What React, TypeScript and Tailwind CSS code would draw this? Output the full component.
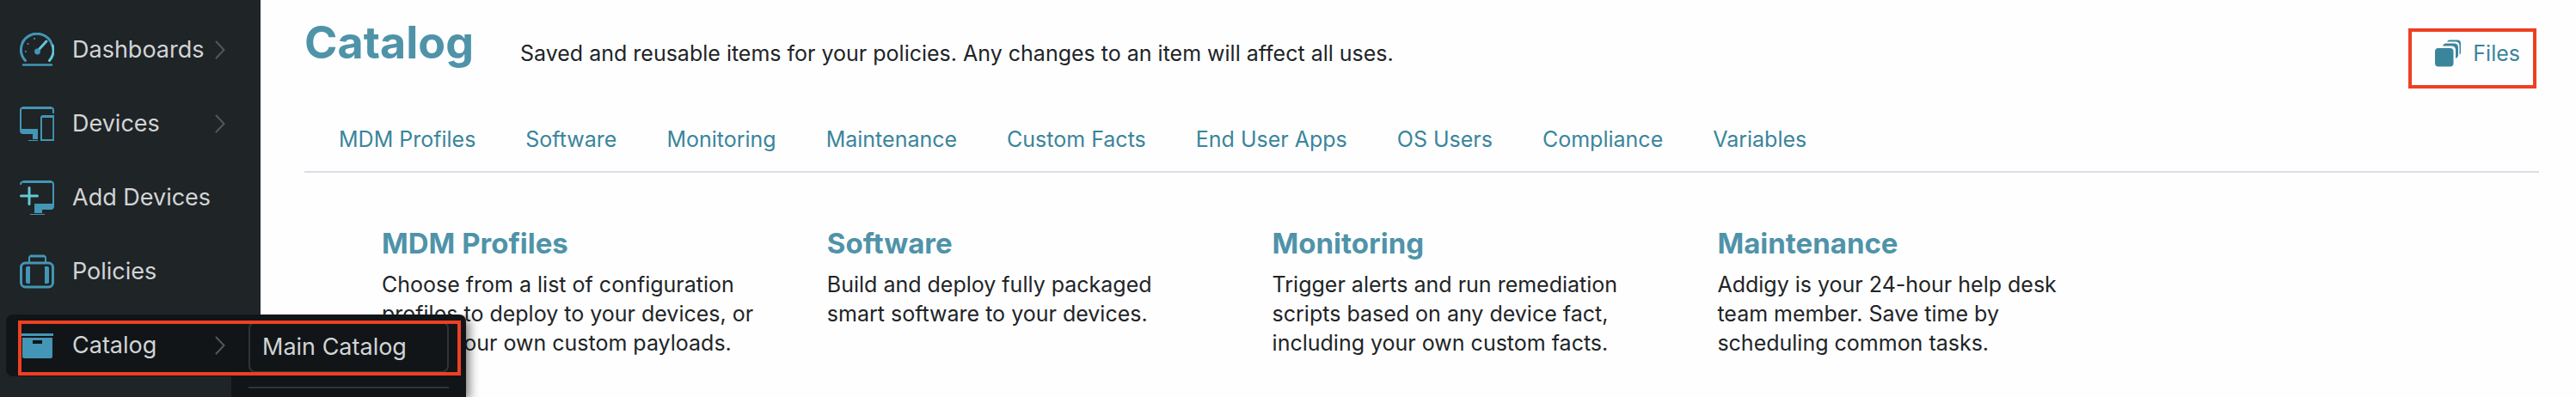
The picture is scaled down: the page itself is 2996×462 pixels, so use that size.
import { useState } from 'react';

const ICON = '#4396b5';
const ACCENT = '#63c7d8';

function DashboardIcon() {
  return (
    <svg viewBox="0 0 40 40" className="size-10 shrink-0" fill="none" strokeLinecap="round">
      <path d="M6.500 32.500A18.500 18.500 0 1 1 37.500 14" stroke={ICON} strokeWidth="3" />
      <path d="M38.200 15A18.500 18.500 0 0 1 34.500 32.500" stroke={ACCENT} strokeWidth="3" />
      <path d="M21 21L31 10" stroke={ACCENT} strokeWidth="3" />
      <circle cx="20.500" cy="22" r="3.400" fill={ICON} />
      <path d="M17 7h.1M9.500 13h.1M6.800 22h.1" stroke={ICON} strokeWidth="2" />
      <path d="M4 37.500h33" stroke={ICON} strokeWidth="2.500" />
    </svg>
  );
}

function DevicesIcon() {
  return (
    <svg viewBox="0 0 40 40" className="size-10 shrink-0" fill="none">
      <path d="M39 8V4q0-2.500-2.500-2.500h-33Q1 1.500 1 4v24" stroke={ICON} strokeWidth="2" />
      <path d="M3 1.500h34" stroke={ICON} strokeWidth="3" />
      <path d="M0 26h21v12h-6v-6H4q-4 0-4-4z" fill={ICON} />
      <path d="M10 39.500h11" stroke={ICON} strokeWidth="1" />
      <path d="M25 40V13q0-2 2-2h12.200v28H24" stroke={ICON} strokeWidth="2" />
      <path d="M26 11.500h14" stroke={ICON} strokeWidth="3" />
    </svg>
  );
}

function AddDevicesIcon() {
  return (
    <svg viewBox="0 0 40 40" className="size-10 shrink-0" fill="none">
      <path d="M1 5q0-3.500 3-3.500h32q3 0 3 3V30" stroke={ICON} strokeWidth="2" />
      <path d="M4 1.500h33" stroke={ICON} strokeWidth="3" />
      <path d="M17 27h23v3q0 4-4 4H26v4h-9z" fill={ICON} />
      <path d="M12 39.500h17" stroke={ICON} strokeWidth="1" />
      <path d="M1.500 18h19M11 8.500v19" stroke={ACCENT} strokeWidth="3" strokeLinecap="round" />
    </svg>
  );
}

function PoliciesIcon() {
  return (
    <svg viewBox="0 0 40 40" className="size-10 shrink-0" fill="none">
      <rect x="1.500" y="10" width="37" height="28" rx="5" stroke={ICON} strokeWidth="3" />
      <path d="M11 10V4q0-2 2-2h15q2 0 2 2v6" stroke={ICON} strokeWidth="2" />
      <path d="M12 2h17" stroke={ICON} strokeWidth="3" />
      <path d="M12 14v20H9q-2 0-2-2V16q0-2 2-2zM29 14v20h3q2 0 2-2V16q0-2-2-2z" fill={ICON} />
    </svg>
  );
}

function CatalogIcon() {
  return (
    <svg viewBox="0 0 40 40" className="size-10 shrink-0">
      <path d="M2 6h37v3H2z" fill={ICON} />
      <path d="M3 11h35v22q0 2-2 2H5q-2 0-2-2z" fill={ICON} />
      <rect x="15" y="14" width="11" height="4" fill="#111518" />
    </svg>
  );
}

function FilesIcon() {
  return (
    <svg viewBox="0 0 30 31" className="h-8 w-[30px] shrink-0" fill="#3a859c">
      <rect x="0" y="9.500" width="21.500" height="21.500" rx="4" />
      <path d="M9 7Q10 4 13 4h9q5 0 5 5v9q0 2-3 3.500V12q0-5-5-5z" />
      <path d="M14 2q1-2 3-2h9q4 0 4 4v11q0 1.500-1.500 2V7q0-5-5-5z" />
    </svg>
  );
}

function Chevron() {
  return (
    <svg viewBox="0 0 12 22" className="h-[22px] w-3 shrink-0" fill="none" stroke="#55585a" strokeWidth="2" strokeLinecap="round">
      <path d="M1.500 1.500l9 9.500-9 9.500" />
    </svg>
  );
}

const navItems = [
  { label: 'Dashboards', icon: DashboardIcon, hasMenu: true },
  { label: 'Devices', icon: DevicesIcon, hasMenu: true },
  { label: 'Add Devices', icon: AddDevicesIcon, hasMenu: false },
  { label: 'Policies', icon: PoliciesIcon, hasMenu: false },
  { label: 'Catalog', icon: CatalogIcon, hasMenu: true },
];

const tabs = [
  'MDM Profiles',
  'Software',
  'Monitoring',
  'Maintenance',
  'Custom Facts',
  'End User Apps',
  'OS Users',
  'Compliance',
  'Variables',
];

const cards = [
  { title: 'MDM Profiles', text: 'Choose from a list of configuration profiles to deploy to your devices, or create your own custom payloads.' },
  { title: 'Software', text: 'Build and deploy fully packaged smart software to your devices.' },
  { title: 'Monitoring', text: 'Trigger alerts and run remediation scripts based on any device fact, including your own custom facts.' },
  { title: 'Maintenance', text: 'Addigy is your 24-hour help desk team member. Save time by scheduling common tasks.' },
];

export default function App() {
  const [active, setActive] = useState('Catalog');

  return (
    <div className="flex min-h-screen bg-[#fefefe] font-['Inter',sans-serif] text-[25px] text-[#212427]">
      <aside className="relative z-10 w-[303px] shrink-0 bg-[#1f2427] pt-[22px] text-[27px] text-[#d2d4d5]">
        <nav>
          <ul className="space-y-[14px] pl-[7px]">
            {navItems.map(({ label, icon: Icon, hasMenu }) => (
              <li key={label} className={active === label ? 'relative rounded-lg bg-[#111518]' : 'relative'}>
                <button type="button" onClick={() => setActive(label)} className="flex h-[72px] w-full items-center pr-[41px] pl-4 text-left whitespace-nowrap">
                  <Icon />
                  <span className="ml-[21px] min-w-0 flex-1">{label}</span>
                  {hasMenu && <Chevron />}
                </button>

                {label === 'Catalog' && active === 'Catalog' && (
                  <>
                    <div className="absolute top-0 left-[262px] w-[273px] rounded-tr-lg bg-[#111518] px-5 pt-2 pb-[10px] shadow-[4px_4px_12px_rgba(0,0,0,0.5)] [clip-path:inset(0_-20px_0_0)]">
                      <a href="#main-catalog" className="flex h-[60px] items-center rounded-lg border-2 border-[#303437] px-[14px] whitespace-nowrap">
                        Main Catalog
                      </a>
                      <hr className="mt-4 border-t-2 border-[#303437]" />
                    </div>
                    <div className="pointer-events-none absolute top-[7px] left-[14px] h-16 w-[515px] border-4 border-[#ee4023]" />
                  </>
                )}
              </li>
            ))}
          </ul>
        </nav>
      </aside>

      <main className="min-w-0 flex-1 pr-[43px] pl-[51px]">
        <header className="flex h-[123px] items-start">
          <h1 className="pt-5 text-[52px] leading-[60px] font-bold text-[#4f93a9]">Catalog</h1>
          <p className="pt-[46px] pl-[54px] leading-8">Saved and reusable items for your policies. Any changes to an item will affect all uses.</p>
          <a href="#files" className="mt-[33px] mr-[3px] ml-auto flex h-[70px] items-start gap-[14px] border-4 border-[#ee4023] pt-[9px] pr-[15px] pl-[27px] leading-8 text-[#3a859c]">
            <FilesIcon />
            Files
          </a>
        </header>

        <nav className="flex h-[78px] gap-[58px] border-b-2 border-[#dcdde5] pt-[23px] pl-10 leading-8 text-[#3a859c]">
          {tabs.map((tab) => (
            <a key={tab} href="#tab" className="whitespace-nowrap hover:underline">{tab}</a>
          ))}
        </nav>

        <div className="grid grid-cols-5 gap-x-20 pt-[62px] pl-[90px]">
          {cards.map((card) => (
            <section key={card.title}>
              <h2 className="text-[33px] leading-10 font-bold text-[#4f93a9]">{card.title}</h2>
              <p className="mt-[11px] leading-[34px]">{card.text}</p>
            </section>
          ))}
        </div>
      </main>
    </div>
  );
}
